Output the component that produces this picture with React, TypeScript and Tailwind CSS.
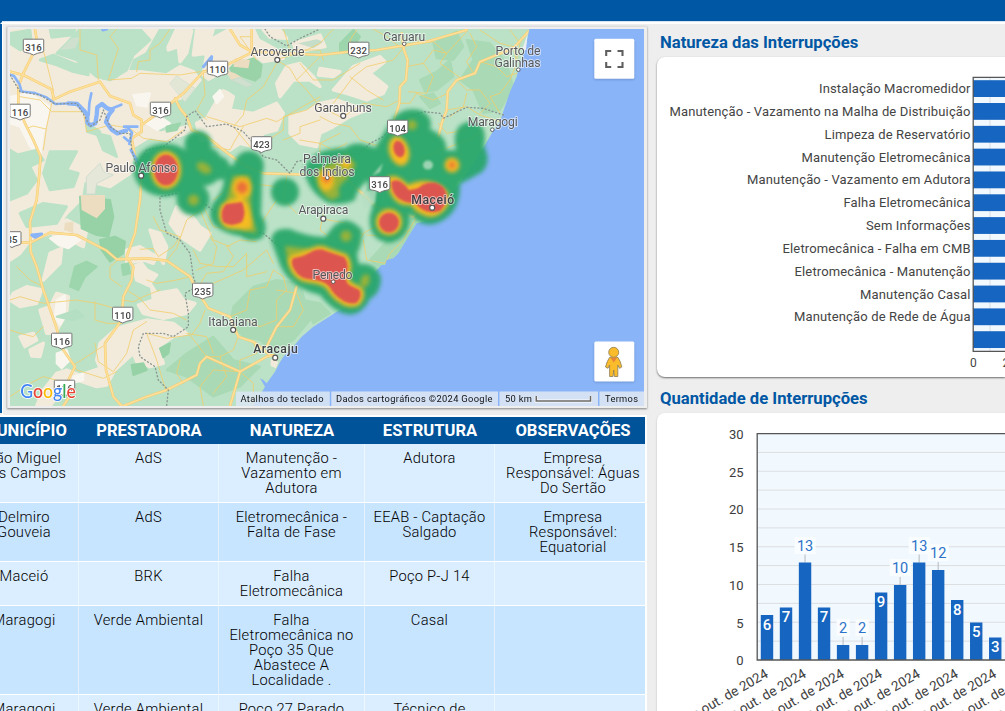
import React from "react";

const font = "Roboto, 'Liberation Sans', sans-serif";

/* ---------- map geometry (third-of-a-pixel units) ---------- */

const sand = [
  "M30 87L500 87L470 115L440 150L395 175L380 215L420 215L500 225L540 200L580 215L600 240L560 290L520 300L440 370L480 400L560 380L575 395L500 420L450 410L400 440L390 520L330 560L250 540L240 600L200 640L150 700L90 720L60 760L30 780L30 560L60 530L80 470L30 440Z",
  "M500 110L530 90L575 92L560 160L540 185L535 140L505 150Z",
  "M590 87L640 87L630 120L690 87L760 87L775 120L830 150L850 175L790 185L770 170L720 200L690 240L640 250L610 225L620 160L580 165Z",
  "M640 320L670 270L700 290L690 330L760 340L830 310L850 340L830 390L790 400L760 440L720 430L690 450L640 420L600 420L590 370L620 355Z",
  "M860 200L900 190L940 230L960 260L930 240L880 240L840 290L830 250Z",
  "M870 350L930 330L960 310L1010 300L1100 330L1050 350L1000 380L960 400L950 440L900 430L870 400Z",
  "M1000 270L1060 200L1140 170L1155 185L1110 220L1160 260L1150 280L1100 300L1040 280Z",
  "M880 130L960 105L975 140L920 150L890 160Z",
  "M790 90L840 90L860 115L810 112Z",
  "M960 205L1020 215L1000 230L955 225Z",
  "M450 690L480 700L500 740L490 790L470 760L460 720Z",
  "M530 620L570 640L600 680L630 700L600 750L540 710L510 670Z",
  "M380 750L420 740L470 770L460 790L430 780L380 790Z",
  "M400 800L425 790L440 810L470 825L450 850L470 880L530 870L550 900L585 910L560 940L490 955L430 940L415 915L460 900L455 860L410 840Z",
  "M300 1030L350 985L440 960L520 970L560 1000L520 1010L475 1040L490 1090L450 1100L410 1085L400 1060L345 1110L320 1155L290 1160L230 1140L200 1160L180 1180L150 1218L110 1218L130 1170L170 1120L200 1110L240 1125L300 1105L290 1080Z",
  "M40 880L80 860L125 870L110 910L60 920L30 900Z",
  "M60 1010L100 1000L110 1020L75 1040Z",
  "M90 1050L130 1030L120 1070L95 1068Z",
  "M120 930L150 920L170 880L205 890L200 940L165 1000L140 1000Z",
  "M150 760L185 745L180 790L130 840Z",
  "M150 670L200 660L260 690L250 740L210 720L165 725Z",
];

const pale = [
  "M30 290L90 280L150 320L130 400L120 470L90 440L60 380L30 370Z",
  "M400 285L450 280L440 320L410 315Z",
  "M440 370L480 350L510 370L470 390Z",
  "M150 715L200 700L240 720L205 745L175 735Z",
  "M170 900L195 885L195 950L180 975L165 950Z",
  "M170 1060L200 1050L210 1080L185 1105L170 1090Z",
  "M640 290L660 270L670 290L650 310Z",
  "M220 1130L250 1120L250 1140L215 1150Z",
];

const mint = [
  "M240 87L420 87L450 120L400 165L380 210L330 240L290 230L230 180L170 160L200 130Z",
  "M120 180L160 165L220 190L265 200L265 225L220 215L170 195Z",
  "M30 100L90 90L95 130L60 150L30 130Z",
  "M150 87L225 87L220 105L155 112Z",
  "M480 90L520 87L490 150L455 175L440 200L415 190L440 160Z",
  "M330 180L380 185L350 230L310 235Z",
  "M30 470L110 450L130 480L90 500L110 540L80 580L30 600Z",
  "M150 455L230 455L200 510L235 520L220 560L150 570L130 520Z",
  "M260 370L300 395L295 405L262 395Z",
  "M60 640L130 610L200 620L170 670L80 680Z",
  "M290 400L330 410L350 470L310 450Z",
  "M620 250L700 210L800 220L810 250L740 300L690 270L660 260Z",
];

const forest = [
  ["M700 195L760 175L785 195L780 230L765 242L700 220L690 205Z", "#9bd3a8"],
  ["M240 590L330 600L340 650L325 710L290 705L245 685Z", "#96d2a6"],
  ["M300 720L345 710L375 725L370 760L330 785L305 750Z", "#96d2a6"],
  ["M225 800L260 785L290 800L255 830L235 870L210 860Z", "#9dd6ac"],
  ["M365 795L385 790L390 820L370 825Z", "#9dd6ac"],
  ["M480 1045L510 1030L505 1060L490 1072Z", "#96d2a6"],
  ["M395 1095L430 1090L440 1110L400 1125Z", "#96d2a6"],
  ["M500 380L540 370L530 390L500 395Z", "#9dd6ac"],
  ["M1020 130L1060 90L1080 110L1050 160L1020 155Z", "#9dd6ac"],
  ["M1260 240L1310 215L1350 180L1360 230L1310 270L1275 275Z", "#a9dab5"],
  ["M1300 130L1370 95L1390 140L1360 180L1310 175Z", "#a9dab5"],
  ["M1400 120L1470 130L1520 190L1540 260L1500 330L1450 340L1420 270L1380 240L1420 180Z", "#a9dab5"],
  ["M1260 290L1300 280L1320 310L1290 325Z", "#a9dab5"],
  ["M700 920L760 860L830 840L900 850L930 960L880 1020L820 1060L780 1020L730 1010L690 970Z", "#a9dab5"],
  ["M560 1060L640 1010L700 1080L780 1100L720 1160L640 1190L560 1130L500 1110Z", "#a9dab5"],
  ["M1110 780L1200 680L1260 640L1220 730L1170 780L1140 800Z", "#a9dab5"],
  ["M910 900L960 910L990 940L940 970Z", "#a9dab5"],
  ["M170 950L230 930L250 950L220 960Z", "#b5dfc2"],
];

const majorRoads = [
  "M105 87L110 120L95 170L70 220L55 260L55 320L75 370L100 420L122 470L118 520L110 600L90 665L92 755L110 800L130 870L165 970L190 1050L225 1100L205 1140L208 1190L190 1218",
  "M30 215L70 225L155 268L162 298L210 275L300 245L330 288L390 310L400 345L425 360L425 395L395 415L405 470L425 530L420 600L405 700L380 770L400 800L395 840L370 890L365 960L315 1030L318 1110L340 1190L365 1218",
  "M425 375L500 320L550 280L610 215L660 205L760 155L960 165L1050 155L1130 150L1280 125L1400 90",
  "M690 87L720 135L755 155L755 87",
  "M30 728L92 728L150 698L230 705L320 752L350 778L440 775L500 782L570 830L590 870L625 925L690 950L715 1010L760 1025L810 1065",
  "M525 295L540 325L560 350L575 390L620 410L690 465L740 500L790 520L960 525",
  "M1205 100L1212 150L1223 180L1218 240L1200 260L1198 310L1180 370L1160 430",
  "M1585 95L1540 145L1440 185L1425 220L1370 240L1343 275L1340 330L1325 370L1315 410",
  "M370 1218L440 1190L500 1170L590 1125L600 1090L620 1070L720 1115L800 1070L820 1065L825 1085",
  "M720 1115L710 1150L690 1218",
  "M890 860L870 930L830 980L800 1040",
  "M1000 500L1130 620L1240 650L1280 590",
];

const minorRoads = [
  "M130 150L160 270L155 310L140 380L130 450", "M240 87L240 150L290 165L295 240", "M350 87L330 110L355 145L325 240L395 235L420 220L540 225L600 215",
  "M510 87L480 130L450 150L450 180L415 185L410 215", "M60 290L120 300L155 335L250 335L260 395L330 375",
  "M80 385L100 378L137 387", "M330 375L390 385L430 415L500 425L550 390", "M610 220L615 285L590 330L620 360",
  "M620 350L720 380L800 355L830 365L960 290", "M730 380L700 430L690 450L640 440", "M830 190L790 260L740 300L730 345L700 380L750 440",
  "M830 180L870 205L890 240L920 270L960 320L1020 350", "M960 300L920 330L850 350L850 390L790 430", "M850 87L870 150L960 150L970 180",
  "M890 240L925 205L960 170", "M750 110L720 110L770 180", "M900 190L940 240L1000 240L1080 190", "M1000 87L960 130L900 160L830 178",
  "M1000 310L1060 230L1100 200L1180 180L1205 150", "M1030 350L1090 310L1160 320L1200 300", "M1050 230L1100 270L1150 300", "M960 350L1000 370L1050 380L1080 420L1140 440",
  "M1020 400L960 430L960 460", "M1220 200L1270 190L1300 230L1280 280L1225 275", "M1240 110L1260 130L1300 125L1340 160L1320 190L1390 240",
  "M1400 95L1340 160L1300 150L1270 190", "M1410 100L1430 140L1400 185L1420 220", "M1440 90L1500 130L1540 140L1550 190L1530 240L1500 280L1470 290L1500 340",
  "M1370 240L1400 270L1440 270L1470 310L1440 340", "M1343 280L1300 300L1250 280L1230 310L1200 310", "M1440 185L1490 200L1520 230L1550 220",
  "M1340 330L1400 320L1440 345L1500 365L1540 280", "M1315 370L1340 400L1400 390", "M1212 150L1160 110L1120 87", "M1070 90L1050 120L1060 155", "M1530 90L1560 130L1550 180",
  "M420 748L460 745L475 770L520 740L540 710L480 690L460 650", "M365 770L330 800L330 835L365 860", "M380 870L420 895L450 930L520 940L560 960",
  "M365 900L400 905L430 890L480 870", "M30 900L60 890L130 910L230 900L290 910L365 930", "M130 980L100 1010L60 1000L30 990",
  "M285 905L285 960L320 970L365 970", "M285 1030L295 1085L340 1115L380 1060L400 990L440 965", "M440 1000L470 1080L497 1170",
  "M315 1035L220 1095L230 1110L310 1135L350 1115", "M440 1000L500 1015L570 1005L620 1070", "M575 1005L600 970L615 930", "M720 1115L640 1110L600 1160L610 1218",
  "M625 925L600 890L640 850L730 810L800 750L820 790", "M590 870L620 820L670 815L700 770L680 740L720 720L770 725",
  "M580 750L600 790L650 800L700 800L740 760L740 830L800 815", "M690 950L740 930L750 870L800 860L820 810L850 830L860 870L830 900L830 960L780 980L740 960",
  "M715 1010L700 1050L660 1070L620 1070", "M760 1025L770 1060L720 1080L720 1115L760 1150L760 1218", "M660 1070L680 1130L640 1180", "M540 1080L530 1120L550 1150",
  "M560 1000L620 1010L640 1060", "M830 870L890 880L910 930L880 980L830 980", "M500 782L530 745L560 660L600 630L640 720L690 740", "M630 710L650 740L640 790L590 810",
  "M440 840L470 850L530 840L570 830", "M30 1190L90 1150L130 1130L205 1150", "M940 870L1000 820L1060 760L1090 700L1160 660L1200 600L1230 540L1230 470",
  "M1090 720L1100 780L1155 790L1170 760L1210 720L1250 650", "M1100 705L1180 710L1230 690", "M970 640L960 690L1000 720", "M960 655L1040 670L1090 705", "M850 420L900 400L900 380L960 360",
  "M860 530L850 600L890 640", "M830 600L790 660L760 720L700 690L640 680L600 600", "M900 420L960 430L1000 450L1040 430", "M1280 520L1260 480L1300 460L1400 420L1440 400",
  "M1400 280L1390 320L1350 350", "M640 600L690 560L750 550L830 560", "M50 800L90 840L130 860",
];

const borders = [
  "M795 87L810 110L860 138L900 115L960 87",
  "M30 225L60 275L120 285L165 312L230 310L255 350L270 380L300 360L310 330L330 380L360 400L390 400L395 450L410 500",
  "M410 500L440 450L490 440L530 410L555 390L560 350L585 332L620 380L680 372L730 395L760 430L790 470L830 480L870 520L890 485L960 470L1080 460L1110 430L1150 410L1190 365L1270 335L1320 340L1330 355L1400 322L1450 325L1510 345",
  "M530 580L480 590L480 630L500 700L540 720L570 760L580 830L590 860L555 880L565 940L565 980L520 1010L490 1000L430 1000L415 1040L420 1070L465 1100L475 1140L505 1170L500 1218",
  "M600 600L700 680L790 700L850 750L900 790L960 840L1000 900",
];

const penedoCore =
  "M294 259Q302 258 310 253.500Q320 248 326 252Q335 255 344 258Q349 265 345 275Q344 282 349 286L359 291Q361 297 356 302Q349 304 342 299Q335 295 330 286Q325 280 311 278.500Q300 278 295 269Q291 262 294 259Z";

/* ---------- small pieces ---------- */

function Shield({ x, y, label, short = false }: { x: number; y: number; label: string; short?: boolean }) {
  const w = short ? 9 : 10.2;
  return (
    <g transform={`translate(${x} ${y})`}>
      <path
        d={`M${-w} -7.2Q${-w} -7.8 ${-w + 1} -7.8H${w - 1}Q${w} -7.8 ${w} -7.2V3.6Q${w} 5 ${w - 2} 5.4Q4 5.8 0 8Q-4 5.8 ${-w + 2} 5.4Q${-w} 5 ${-w} 3.6Z`}
        fill="#fff"
        stroke="#777"
        strokeWidth="1"
      />
      <text y="3.6" textAnchor="middle" fontSize="9.6" fontWeight="500" fill="#444" letterSpacing="0.1">
        {label}
      </text>
    </g>
  );
}

function Place({
  x, y, name, w, dot, big = false, bold = false,
}: { x: number; y: number; name: string; w: number; dot?: [number, number]; big?: boolean; bold?: boolean }) {
  return (
    <g>
      {dot && (
        <circle cx={dot[0]} cy={dot[1]} r={big ? 2.5 : 1.8} fill="#fff" stroke="#555" strokeWidth={big ? 1.2 : 0.9} />
      )}
      <text
        x={x}
        y={y}
        textAnchor="middle"
        textLength={w}
        fontSize="12.2"
        fontWeight={bold ? 500 : 400}
        fill={bold ? "#3f4145" : "#57585c"}
        stroke="#fff"
        strokeOpacity="0.6"
        strokeWidth="1.8"
        strokeLinejoin="round"
        paintOrder="stroke"
      >
        {name}
      </text>
    </g>
  );
}

function MapView() {
  return (
    <svg className="block h-[377px] w-[634px]" viewBox="10 29 634 377" fontFamily={font}>
      <defs>
        <filter id="b1" x="-30%" y="-30%" width="160%" height="160%"><feGaussianBlur stdDeviation="2.1" /></filter>
        <filter id="b2" x="-50%" y="-50%" width="200%" height="200%"><feGaussianBlur stdDeviation="2" /></filter>
        <filter id="b3" x="-50%" y="-50%" width="200%" height="200%"><feGaussianBlur stdDeviation="1.1" /></filter>
      </defs>
      <rect x="10" y="29" width="634" height="377" fill="#bbe2c6" />
      <g transform="scale(0.33333)" strokeLinejoin="round" strokeLinecap="round" fill="none">
        {sand.map((d) => <path key={d} d={d} fill="#f2ebdc" stroke="#f2ebdc" strokeWidth="10" />)}
        {pale.map((d) => <path key={d} d={d} fill="#f9f6ef" stroke="#f9f6ef" strokeWidth="6" />)}
        {mint.map((d) => <path key={d} d={d} fill="#bbe2c6" stroke="#bbe2c6" strokeWidth="8" />)}
        {forest.map(([d, c]) => <path key={d} d={d} fill={c} stroke={c} strokeWidth="6" />)}
        <path d="M242 585H315V627L290 655L245 630Z" fill="#ecdcc0" />
        <path d="M195 668L220 665L220 700L192 690Z" fill="#ecdcc0" />
        <path d="M705 175L750 180L745 205L700 200Z" fill="#ecdcc0" />
        <path d="M675 210L705 220L730 235L695 242Z" fill="#ecdcc0" />
        <path d="M510 250L530 228L585 265L555 305Z" fill="#e1e6d5" stroke="#cfdcd0" strokeWidth="2" />
        <path d="M260 530L300 490L310 515L340 525L290 550L285 582L260 582Z" fill="#e5e8d9" stroke="#cfdcd0" strokeWidth="3" />
        <path d="M180 150L215 115L240 112L225 145Z" fill="#d0e0cf" />
        <path d="M695 240L720 232L760 255L740 262Z" fill="#d0e0cf" stroke="#c2d8ca" strokeWidth="2" />
        <path d="M895 130L950 118L970 125L940 145Z" fill="#c6ddc9" />
        <g stroke="#f3cd6a" strokeOpacity=".8" strokeWidth="3">
          {minorRoads.map((d) => <path key={d} d={d} />)}
        </g>
        <g stroke="#f5cd74" strokeWidth="8">{majorRoads.map((d) => <path key={d} d={d} />)}</g>
        <g stroke="#ffe09a" strokeWidth="4.6">{majorRoads.map((d) => <path key={d} d={d} />)}</g>
        <g stroke="#8ab4f8">
          <path d="M30 224L42 228L58 252L64 272" strokeWidth="8" />
          <path d="M64 274L105 279L140 292L166 312L205 310" strokeWidth="7" />
          <path d="M205 310L232 312L252 332L262 345L262 368L272 376L286 370L290 345L292 322L306 312L320 324L338 330L326 345L318 366L334 388L352 400L378 392" strokeWidth="13" />
          <path d="M274 280L268 310L266 345M325 330L345 322L364 314M372 380L412 380M384 384L396 398L388 432M372 412L386 424" strokeWidth="8" />
          <path d="M393 450L415 490L440 520M610 200L635 170L632 195M308 90L320 87M95 705L125 702L105 712Z" strokeWidth="9" />
        </g>
        <path
          d="M1588 87L1575 150L1560 190L1550 230L1530 275L1513 325L1500 365L1478 395L1455 435L1440 460L1400 520L1370 560L1330 620L1290 660L1250 670L1225 710L1195 760L1180 775L1160 780L1155 795L1145 795L1100 840L1080 880L1040 920L1010 935L985 952L940 980L905 1010L880 1040L850 1070L838 1090L825 1115L800 1150L790 1140L780 1135L795 1160L760 1218H1932V87Z"
          fill="#8ab4f8"
        />
        <path d="M1573 130L1583 100L1578 150L1565 150Z" fill="#e9edf1" />
        <path d="M812 1078L835 1085L828 1105L812 1098Z" fill="#f2ebdc" />
        <g stroke="#8a9591" strokeWidth="4" strokeDasharray="3 8">{borders.map((d) => <path key={d} d={d} />)}</g>
      </g>

      {/* heat: green base */}
      <g filter="url(#b1)" fill="#27a668" opacity=".92">
        <ellipse cx="165" cy="170" rx="31.5" ry="26.5" /><circle cx="198" cy="144" r="13.5" /><circle cx="203" cy="166" r="20" />
        <circle cx="193" cy="199" r="16.5" /><circle cx="218" cy="168" r="12" /><circle cx="249" cy="166" r="15" />
        <path d="M222 173Q236 156 262 165Q262 190 261 214Q270 228 262 238Q252 244 240 236Q225 234 214 225Q206 214 213 203Q228 186 222 173Z" />
        <circle cx="285" cy="192" r="14" />
        <path d="M304 170Q310 148 345 148Q356 139 375 148L388 126Q398 106 420 110Q434 117 430 129Q448 137 446 150L456 150Q450 122 474 121Q488 126 484 146Q492 162 482 172Q472 178 460 184Q461 212 440 222Q422 230 410 213Q411 239 389 243Q367 240 370 215Q376 203 368 192L368 180Q356 190 355 200Q343 206 328 203Q308 192 304 170Z" />
        <path d="M271 240Q273 227 290 229Q305 236 325 237L332 228Q346 212 362 230Q363 242 357 254L359 264Q376 262 381 278Q381 293 370 299Q360 319 342 313Q330 308 320 295Q290 288 280 265Z" />
      </g>
      <g filter="url(#b3)" fill="#b6dfc3" opacity=".8">
        <ellipse cx="428" cy="165" rx="5" ry="4.500" /><path d="M360 194L377 188L375 203L364 208Z" /><path d="M372 176L383 163L380 172Z" />
      </g>
      {/* olive spots */}
      <g filter="url(#b2)" fill="#b5b52c" opacity=".78">
        <ellipse cx="204" cy="168" rx="8" ry="5" transform="rotate(30 204 168)" /><circle cx="193.500" cy="200" r="5.500" />
        <circle cx="346" cy="236" r="5.500" /><circle cx="412" cy="125" r="5" /><ellipse cx="365" cy="281" rx="4.500" ry="7" transform="rotate(20 365 281)" />
        <path d="M315 172Q325 166 347 155L356 165L346 180Q335 188 340 196L332 200Q318 195 315 172Z" />
        <path d="M233 176L250 176L251 215L257 233L243 231L224 210Z" />
        <path d="M285 246L310 249L300 270L288 262Z" />
      </g>
      <g filter="url(#b2)" fill="#f4bb24">
        <ellipse cx="166" cy="170" rx="15" ry="19" /><ellipse cx="242" cy="188" rx="9.500" ry="11" />
        <path d="M221 205Q232 197 240 198L247 202Q252 213 252 228Q238 231 226 228Q215 220 221 205Z" />
        <ellipse cx="326.500" cy="180" rx="7.500" ry="11" /><circle cx="346" cy="164" r="4.500" />
        <ellipse cx="399" cy="151" rx="10" ry="15" transform="rotate(-15 399 151)" /><circle cx="452" cy="165" r="7.5" />
        <path d="M387 178Q396 172 408 185Q420 179 432 182Q451 187 449 203Q443 216 431 217Q417 215 411 205Q390 208 387 178Z" />
        <circle cx="389" cy="222" r="13" />
        <path d={penedoCore} stroke="#f4bb24" strokeWidth="9" strokeLinejoin="round" />
      </g>
      <g filter="url(#b3)" fill="#dc574f">
        <ellipse cx="166" cy="170" rx="12" ry="15.500" />
        <path d="M226 204L242 202Q247 213 242 222Q231 228 223 222Q219 211 226 204Z" />
        <ellipse cx="399" cy="149" rx="5.5" ry="8.5" transform="rotate(-15 399 149)" />
        <path d="M391 182Q399 176 409 190Q419 189 422 185Q435 179 444 188Q451 200 440 211Q425 216 415 203Q392 203 391 182Z" />
        <circle cx="389" cy="222.500" r="10" />
        <path d={penedoCore} stroke="#dc574f" strokeWidth="2" strokeLinejoin="round" />
      </g>
      <g filter="url(#b2)" fill="#e8603f" opacity=".85">
        <ellipse cx="242" cy="187.500" rx="5.500" ry="6" /><ellipse cx="326.500" cy="178" rx="3.500" ry="4.500" /><circle cx="452" cy="165" r="3" />
      </g>

      {/* labels */}
      <Shield x={33.500} y={47} label="316" /><Shield x={217.500} y={69} label="110" /><Shield x={160.500} y={110} label="316" />
      <Shield x={20} y={112} label="116" /><Shield x={261.500} y={144.500} label="423" /><Shield x={358.700} y={50} label="232" />
      <Shield x={397.700} y={128} label="104" /><Shield x={379.700} y={184.500} label="316" /><Shield x={202.700} y={291} label="235" />
      <Shield x={122.700} y={315} label="110" /><Shield x={61.700} y={341} label="116" /><Shield x={64.500} y={388} label="116" />
      <Shield x={12} y={239.500} label="35" short />
      <Place x={277.500} y={55.800} w={54} name="Arcoverde" dot={[277.300, 59.800]} big />
      <Place x={404.300} y={40.800} w={42} name="Caruaru" dot={[404.200, 43.800]} />
      <Place x={518} y={54.800} w={45} name="Porto de" />
      <Place x={517.500} y={66.500} w={46} name="Galinhas" dot={[518.300, 69.700]} />
      <Place x={343} y={111.700} w={57.500} name="Garanhuns" dot={[343.200, 115.800]} big />
      <Place x={492.700} y={125.700} w={50} name="Maragogi" dot={[492.300, 129.700]} />
      <Place x={141.200} y={171.700} w={71.500} name="Paulo Afonso" dot={[141.200, 175.700]} big />
      <Place x={327} y={162.700} w={48} name="Palmeira" />
      <Place x={327} y={175.700} w={55} name="dos Índios" dot={[327.300, 177.800]} />
      <Place x={323.500} y={213.500} w={50} name="Arapiraca" dot={[323.300, 218.700]} big />
      <Place x={432.700} y={203.700} w={43} name="Maceió" dot={[432.200, 207.700]} big bold />
      <Place x={332.500} y={278.700} w={40} name="Penedo" dot={[333.200, 281.700]} />
      <Place x={233} y={325.700} w={49.500} name="Itabaiana" dot={[233.200, 329.800]} big />
      <Place x={275.500} y={352.700} w={44.500} name="Aracaju" dot={[275.200, 357.700]} big bold />

      {/* attribution */}
      <rect x="236" y="391.500" width="93.800" height="14.500" fill="#dbe5f3" fillOpacity=".86" />
      <rect x="331.300" y="391.500" width="166.700" height="14.500" fill="#dbe5f3" fillOpacity=".9" />
      <rect x="499.500" y="391.500" width="98.500" height="14.500" fill="#dbe5f3" fillOpacity=".9" />
      <rect x="599.500" y="391.500" width="44.500" height="14.500" fill="#dbe5f3" fillOpacity=".9" />
      <g fontSize="9.300" fill="#111">
        <text x="240.500" y="402" textLength="83">Atalhos do teclado</text>
        <text x="336" y="402" textLength="156.500">Dados cartográficos ©2024 Google</text>
        <text x="505" y="402" textLength="27">50 km</text>
        <text x="605" y="402" textLength="33">Termos</text>
      </g>
      <path d="M536.300 396V401H590.500V396" fill="none" stroke="#fff" strokeWidth="3" />
      <path d="M536.300 396V401H590.500V396" fill="none" stroke="#696969" strokeWidth="1.600" />

      <text
        x="20.300" y="398" fontSize="19.500" textLength="55.500" lengthAdjust="spacingAndGlyphs" fontFamily="Lato, sans-serif" fontWeight="500"
        stroke="#fff" strokeWidth="1.800" strokeOpacity=".9" paintOrder="stroke"
      >
        <tspan fill="#4285f4">G</tspan><tspan fill="#ea4335">o</tspan><tspan fill="#fbbc04">o</tspan>
        <tspan fill="#4285f4">g</tspan><tspan fill="#34a853">l</tspan><tspan fill="#ea4335">e</tspan>
      </text>

      {/* map buttons */}
      <g>
        <rect x="594" y="40" width="40.500" height="40" rx="2" fill="#3c5f96" opacity=".35" filter="url(#b3)" />
        <rect x="594.300" y="38.800" width="40" height="40" rx="1.500" fill="#fff" />
        <path d="M606.200 56V51H611.200M617.500 51H622.500V56M622.500 62V67H617.500M611.200 67H606.200V62" fill="none" stroke="#5f5f5f" strokeWidth="2.100" />
        <rect x="594" y="343" width="40.500" height="39.500" rx="2" fill="#3c5f96" opacity=".35" filter="url(#b3)" />
        <rect x="594.300" y="341.500" width="40" height="40" rx="1.500" fill="#fff" />
        <g fill="#fbbc2b" stroke="#8c7b55" strokeWidth=".8">
          <path d="M609.500 357.500Q613.700 355.500 618 357.500Q620.500 361 621.800 367L619.500 368.300L617.800 365V376.500H614.400L613.700 370L613 376.500H609.600V365L608 368.300L605.500 367Q607 361 609.500 357.500Z" />
          <circle cx="613.700" cy="352.300" r="5" />
        </g>
        <path d="M610.500 357.700H617L613.800 362.500Z" fill="#e8833a" />
      </g>
    </svg>
  );
}

/* ---------- table ---------- */

const columns = ["MUNICÍPIO", "PRESTADORA", "NATUREZA", "ESTRUTURA", "OBSERVAÇÕES"];

const rows: { height: string; cells: string[][] }[] = [
  { height: "h-[59px]", cells: [["São Miguel", "dos Campos"], ["AdS"], ["Manutenção -", "Vazamento em", "Adutora"], ["Adutora"], ["Empresa", "Responsável: Águas", "Do Sertão"]] },
  { height: "h-[59px]", cells: [["Delmiro", "Gouveia"], ["AdS"], ["Eletromecânica -", "Falta de Fase"], ["EEAB - Captação", "Salgado"], ["Empresa", "Responsável:", "Equatorial"]] },
  { height: "h-[44px]", cells: [["Maceió"], ["BRK"], ["Falha", "Eletromecânica"], ["Poço P-J 14"], []] },
  { height: "h-[89px]", cells: [["Maragogi"], ["Verde Ambiental"], ["Falha", "Eletromecânica no", "Poço 35 Que", "Abastece A", "Localidade ."], ["Casal"], []] },
  { height: "h-[60px]", cells: [["Maragogi"], ["Verde Ambiental"], ["Poço 27 Parado"], ["Técnico de"], []] },
];

function OutageTable() {
  return (
    <div className="h-[296px] w-[647px] overflow-hidden border-r-2 border-white bg-[#eeeeee]">
      <div className="-ml-[30px] w-[675px] border-t-2 border-white text-black">
        <div className="grid h-[27px] grid-cols-[109px_140px_146px_130px_150px] items-center bg-[#005299] pt-px text-center text-[16.6px] font-bold leading-[20px] text-white">
          {columns.map((c) => <div key={c} className="whitespace-nowrap last:pl-[6px]">{c}</div>)}
        </div>
        {rows.map((row, i) => (
          <div
            key={i}
            className={`grid grid-cols-[109px_140px_146px_130px_150px] border-b border-white text-center text-[14.7px] font-light leading-[15px] tracking-[0.25px] ${row.height} ${i % 2 ? "bg-[#c8e5ff]" : "bg-[#dbeeff]"}`}
          >
            {row.cells.map((lines, j) => (
              <div key={j} className="border-r border-white/50 pt-[7px] last:border-r-0 last:pl-[6px]">
                {lines.map((line) => <div key={line} className="whitespace-nowrap">{line}</div>)}
              </div>
            ))}
          </div>
        ))}
      </div>
    </div>
  );
}

/* ---------- charts ---------- */

const causes: [string, number][] = [
  ["Instalação Macromedidor", 151.500],
  ["Manutenção - Vazamento na Malha de Distribuição", 301],
  ["Limpeza de Reservatório", 146],
  ["Manutenção Eletromecânica", 169],
  ["Manutenção - Vazamento em Adutora", 223.500],
  ["Falha Eletromecânica", 127],
  ["Sem Informações", 104.500],
  ["Eletromecânica - Falha em CMB", 188],
  ["Eletromecânica - Manutenção", 176],
  ["Manutenção Casal", 110.500],
  ["Manutenção de Rede de Água", 176.500],
  ["", 0],
];

function CauseChart() {
  return (
    <svg className="block h-[320px] w-[348px]" viewBox="657 57 348 320" fontFamily={font}>
      <rect x="973" y="77.500" width="40" height="273.500" fill="#f1f8fe" />
      <path d="M990 78V351" stroke="#dadde0" />
      {causes.map(([label, w], i) => (
        <g key={i}>
          <rect x="973" y={80.200 + i * 22.820} width="40" height="16.800" fill="#1665c0" />
          {label && (
            <text x={970.500 - w} y={93.200 + i * 22.820} textLength={w} fontSize="13" fill="#444">{label}</text>
          )}
        </g>
      ))}
      <path d="M1006 77.300H973.200V351.300H1006" fill="none" stroke="#555" strokeWidth="1.300" />
      <text x="973.300" y="367" textAnchor="middle" fontSize="12" fill="#444">0</text>
      <text x="1002.500" y="367" fontSize="12" fill="#444">20</text>
    </svg>
  );
}

const daily = [6, 7, 13, 7, 2, 2, 9, 10, 13, 12, 8, 5, 3];
const outside: Record<number, number> = { 2: 551, 4: 633, 5: 633, 7: 573, 8: 551, 9: 558 };

function DailyChart() {
  return (
    <svg className="block h-[298px] w-[348px]" viewBox="657 413 348 298" fontFamily={font}>
      <rect x="757" y="433.500" width="250" height="226.500" fill="#f1f8fe" />
      {Array.from({ length: 11 }, (_, i) => (
        <path key={i} d={`M757 ${452.400 + i * 18.870}H1006`} stroke="#dcdee1" />
      ))}
      {[30, 25, 20, 15, 10, 5, 0].map((v, i) => (
        <text key={v} x="743.500" y={439 + i * 37.700} textAnchor="end" fontSize="13" fill="#3c3c3c">{v}</text>
      ))}
      {daily.map((v, i) => {
        const x = 767 + i * 19.020;
        const top = 660 - v * 7.500;
        return (
          <g key={i}>
            {outside[i] && <path d={`M${x} ${top - 8}V${top}`} stroke="#b7babd" />}
            <rect x={x - 6.200} y={top} width="12.400" height={660 - top} fill="#1665c0" />
            {!outside[i] && (
              <text x={x} y={top + 14.500} textAnchor="middle" fontSize="15" fontWeight="500" fill="#fff">{v}</text>
            )}
          </g>
        );
      })}
      {Object.entries(outside).map(([k, y]) => {
        const x = 767 + Number(k) * 19.020;
        const v = daily[Number(k)];
        const w = v > 9 ? 21 : 13;
        return (
          <g key={k}>
            <rect x={x - w / 2} y={y - 14} width={w} height="17" fill="#fafdff" />
            <text x={x} y={y} textAnchor="middle" fontSize="14.500" fill="#2a72c8">{v}</text>
          </g>
        );
      })}
      <path d="M1006 433.700H757.200V660H1006" fill="none" stroke="#555" strokeWidth="1.300" />
      {Array.from({ length: 10 }, (_, i) => (
        <text
          key={i}
          transform={`translate(${769 + i * 38.040} 676.500) rotate(-30)`}
          textAnchor="end"
          fontSize="13.500"
          fill="#3c3c3c"
        >
          {`${1 + i * 2} de out. de 2024`}
        </text>
      ))}
    </svg>
  );
}

export default function App() {
  return (
    <div className="flex h-[711px] w-[1005px] flex-col overflow-hidden bg-[#eeeeee] font-[Roboto,'Liberation_Sans',sans-serif]">
      <header className="h-[21px] shrink-0 bg-[#0057a4]" />
      <div className="h-[3px] shrink-0 border-b-2 border-l-2 border-b-white border-l-[#0057a4] bg-[#d5e3f0]" />
      <div className="flex min-h-0 flex-1">
        <div className="flex w-[650px] shrink-0 flex-col">
          <div className="h-[391px] shrink-0 bg-linear-to-b from-[#0057a4] from-[389px] to-[#eeeeee] to-[389px] pl-[1.5px]">
            <div className="h-full border-l border-white bg-[#eeeeee] pl-[4.5px] pt-[2px]">
              <div className="h-[382px] w-[640px] border-l border-t border-[#dddddd] bg-[#eeeeee] pl-[2px] pt-[2px] shadow-[0_1px_2px_rgba(0,0,0,0.45)]">
                <MapView />
              </div>
            </div>
          </div>
          <OutageTable />
        </div>
        <div className="w-[355px] shrink-0 pl-[7px]">
          <h2 className="h-[33px] pl-[3px] pt-[7px] text-[16.65px] font-bold leading-[24px] text-[#0057a4]">Natureza das Interrupções</h2>
          <section className="h-[320px] w-[348px] overflow-hidden rounded-l-[8px] bg-white shadow-[0_1px_2px_rgba(0,0,0,0.55)]">
            <CauseChart />
          </section>
          <h2 className="h-[36px] pl-[3px] pt-[10px] text-[16.65px] font-bold leading-[24px] text-[#0057a4]">Quantidade de Interrupções</h2>
          <section className="h-[298px] w-[348px] overflow-hidden rounded-tl-[8px] bg-white shadow-[0_1px_2px_rgba(0,0,0,0.25)]">
            <DailyChart />
          </section>
        </div>
      </div>
    </div>
  );
}
